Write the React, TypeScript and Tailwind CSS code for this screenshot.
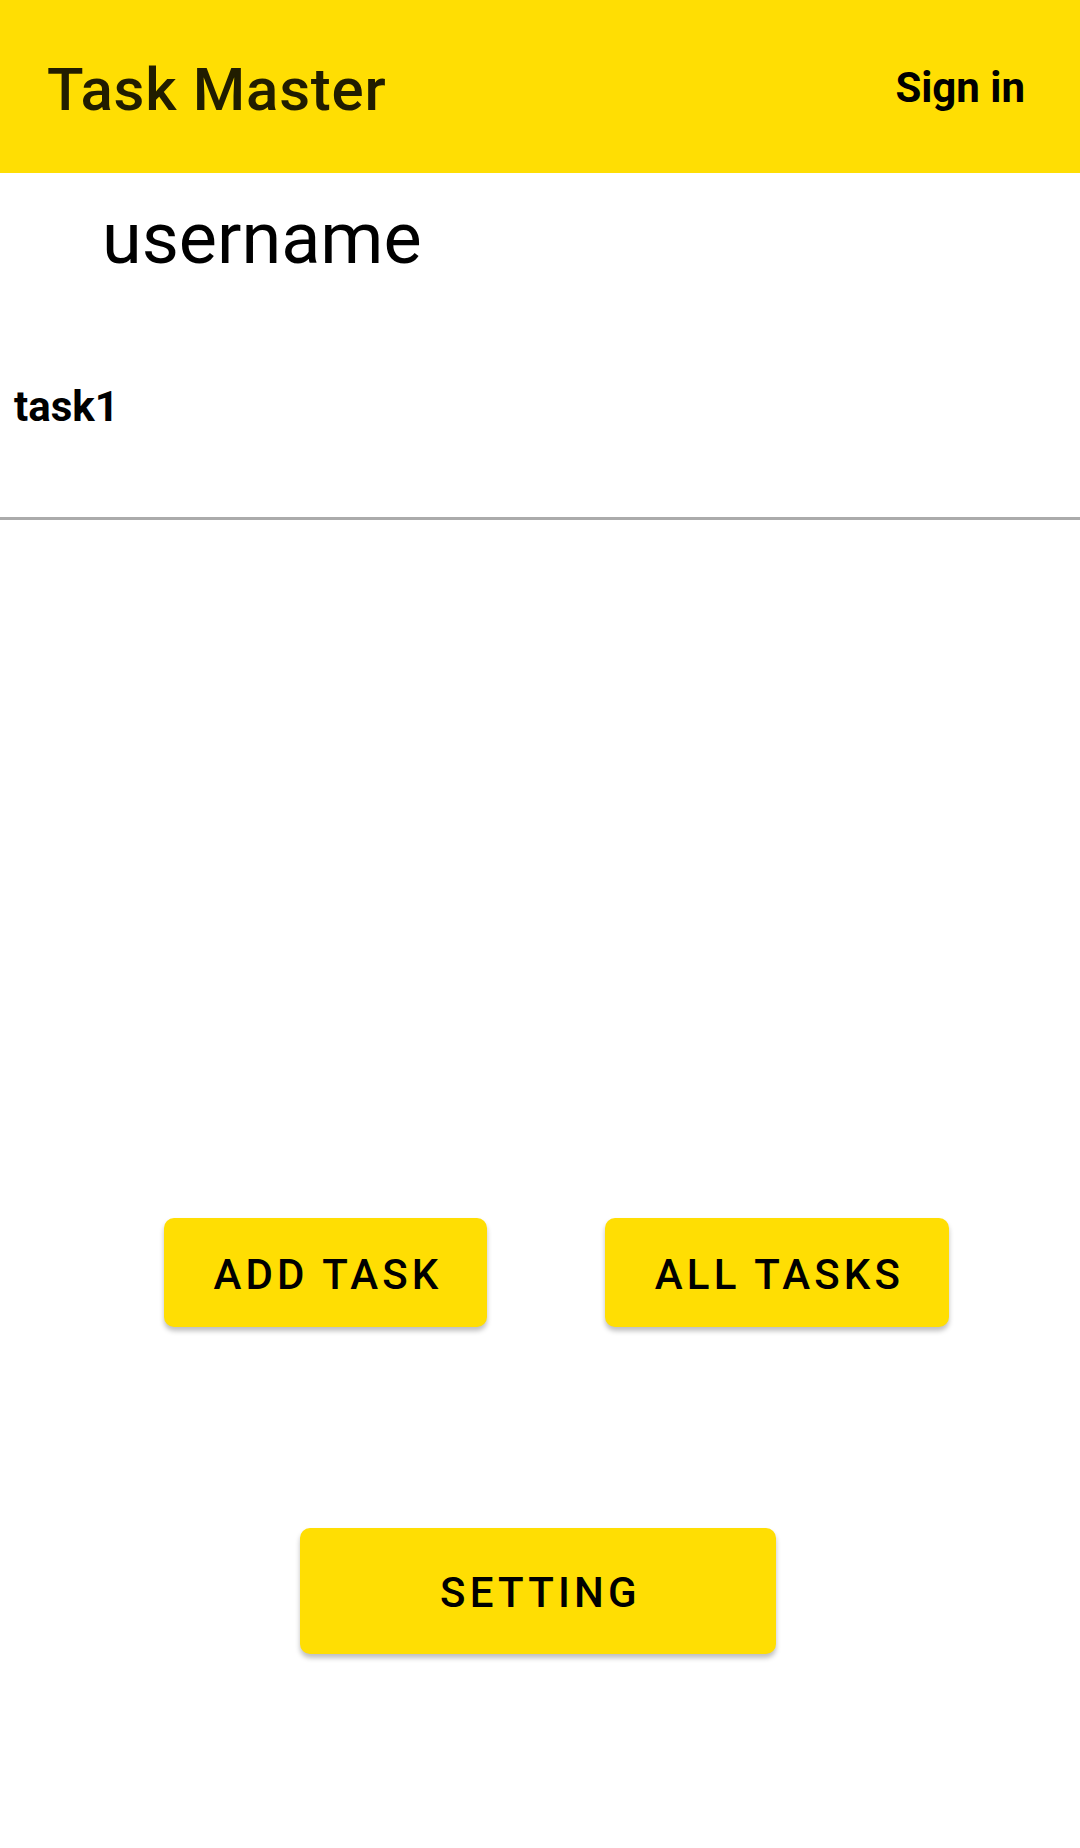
import React from 'react';

const yellow = 'bg-[#FFDE03]';

function ActionButton({ label, className }: { label: string; className: string }) {
  return (
    <button
      type="button"
      className={`${yellow} ${className} flex items-center justify-center rounded-[10px] pt-[4px] pl-[5px] text-[42px] leading-[42px] font-medium tracking-[0.1em] text-black shadow-[0_4px_5px_rgba(0,0,0,0.25)]`}
    >
      {label}
    </button>
  );
}

export default function App() {
  return (
    <div
      className="flex min-h-[1848px] w-[1080px] flex-col bg-white"
      style={{ fontFamily: 'Roboto, "Noto Sans", "Liberation Sans", sans-serif' }}
    >
      <header className={`${yellow} flex h-[173px] w-full items-start justify-between`}>
        <h1 className="mt-[60px] ml-[47px] text-[60px] leading-[60px] font-medium tracking-[0.0125em] text-[#211d00]">
          Task Master
        </h1>
        <span className="mt-[67px] mr-[55px] text-[42px] leading-[42px] font-bold text-black">Sign in</span>
      </header>

      <div className="mt-[30px] pl-[102px] text-[72px] leading-[72px] text-black">username</div>

      <div className="mt-[112px] pl-[14px] text-[42px] leading-[40px] font-bold text-black">task1</div>

      <div className="mt-[90px] h-[3px] w-full bg-[#ababab]" />

      <div className="mt-[698px] flex">
        <ActionButton label="ADD TASK" className="ml-[164px] h-[109px] w-[323px]" />
        <ActionButton label="ALL TASKS" className="ml-[118px] h-[109px] w-[344px]" />
      </div>

      <div className="mt-[201px] flex">
        <ActionButton label="SETTING" className="ml-[300px] h-[126px] w-[476px]" />
      </div>
    </div>
  );
}
